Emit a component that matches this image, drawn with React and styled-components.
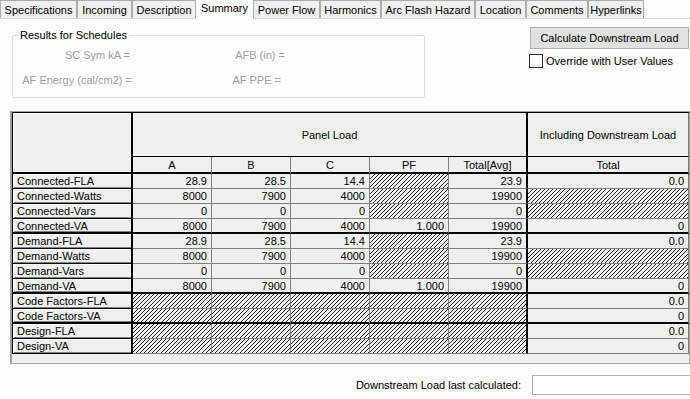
import React from 'react';
import styled, { createGlobalStyle } from 'styled-components';

const GlobalStyle = createGlobalStyle`
  html, body {
    margin: 0;
    padding: 0;
    background: #fcfcfc;
  }
  body {
    font-family: "Liberation Sans", Arial, sans-serif;
    font-size: 11px;
    color: #000;
  }
`;

const Page = styled.div`
  width: 690px;
  height: 399px;
  overflow: hidden;
`;

const TabStrip = styled.div`
  display: flex;
  align-items: flex-start;
  height: 19px;
  box-sizing: border-box;
  border-bottom: 1px solid #d9d9d9;
`;

const Tab = styled.div`
  box-sizing: border-box;
  width: ${(p) => p.$width}px;
  height: ${(p) => (p.$active ? 19 : 18)}px;
  padding-top: ${(p) => (p.$active ? 1 : 3)}px;
  text-align: center;
  line-height: 13px;
  background: ${(p) => (p.$active ? '#fcfcfc' : '#f0f0f0')};
  border: 1px solid ${(p) => (p.$active ? '#fcfcfc' : '#acacac')};
  border-bottom: none;
  white-space: nowrap;
`;

const Top = styled.div`
  display: flex;
  align-items: flex-start;
  padding-top: 8px;
`;

const Group = styled.fieldset`
  box-sizing: border-box;
  margin: 2px 0 0 12px;
  padding: 0;
  width: 413px;
  height: 69px;
  border: 1px solid #dcdcdc;
  border-radius: 2px;
`;

const Legend = styled.legend`
  margin-left: 5px;
  padding: 0 2px;
  line-height: 13px;
`;

const Results = styled.div`
  display: grid;
  grid-template-columns: 119px 153px;
  grid-auto-rows: 13px;
  row-gap: 12px;
  padding-top: 7px;
  line-height: 13px;
  color: #a0a0a0;
`;

const ResultLabel = styled.div`
  text-align: right;
  white-space: nowrap;
  padding-right: ${(p) => p.$pad || 0}px;
`;

const Side = styled.div`
  margin-left: auto;
  margin-right: 1px;
  width: 159px;
  display: flex;
  flex-direction: column;
`;

const Button = styled.button`
  box-sizing: border-box;
  height: 22px;
  width: 100%;
  margin: 0;
  padding: 0;
  font-family: inherit;
  font-size: 11px;
  color: #000;
  background: #e1e1e1;
  border: 1px solid #adadad;
`;

const CheckRow = styled.label`
  display: flex;
  align-items: center;
  margin: 5px 0 0 -1px;
  line-height: 13px;
  white-space: nowrap;
`;

const CheckBox = styled.span`
  box-sizing: border-box;
  width: 14px;
  height: 14px;
  border: 1px solid #333;
  background: #fff;
  margin-right: 3px;
`;

const Frame = styled.div`
  box-sizing: border-box;
  margin: 13px 0 0 10px;
  width: 680px;
  border: 1px solid #a0a0a0;
  border-left-width: 2px;
  background: #f0f0f0;
  padding-bottom: 9px;
`;

const Grid = styled.div`
  display: grid;
  grid-template-columns: 120px repeat(5, 79px) 161px;
  grid-template-rows: 44px 17px repeat(12, 15px);
  border-left: 1px solid #000;
  border-top: 1px solid #000;
  line-height: 14px;
`;

const Corner = styled.div`
  grid-row: span 2;
  box-sizing: border-box;
  background: #f0f0f0;
  border-right: 2px solid #000;
  border-bottom: 2px solid #000;
  box-shadow: inset 1px 1px 0 #fff;
`;

const GroupHead = styled.div`
  grid-column: span ${(p) => p.$span || 1};
  box-sizing: border-box;
  display: flex;
  align-items: center;
  justify-content: center;
  background: #f0f0f0;
  border-right: ${(p) => (p.$strong ? '2px solid #000' : '1px solid #808080')};
  border-bottom: 1px solid #000;
  white-space: nowrap;
`;

const ColHead = styled.div`
  box-sizing: border-box;
  display: flex;
  align-items: center;
  justify-content: center;
  background: #f0f0f0;
  border-right: ${(p) => (p.$strong ? '2px solid #000' : '1px solid #808080')};
  border-bottom: 2px solid #000;
`;

const RowHead = styled.div`
  box-sizing: border-box;
  padding-left: 4px;
  background: #f0f0f0;
  border-right: 2px solid #000;
  border-bottom: ${(p) => (p.$thick ? '2px' : '1px')} solid #000;
  box-shadow: inset 1px 1px 0 #fff, inset 0 -1px 0 #808080;
  white-space: nowrap;
  overflow: hidden;
`;

const Cell = styled.div`
  box-sizing: border-box;
  padding-right: 4px;
  text-align: right;
  background: ${(p) =>
    p.$hatched
      ? 'repeating-linear-gradient(135deg, #222 0 0.7px, #f0f0f0 0.7px 2.9px)'
      : '#f0f0f0'};
  border-right: ${(p) => (p.$strong ? '2px solid #000' : '1px solid #808080')};
  border-bottom: ${(p) => (p.$thick ? '2px solid #000' : '1px solid #808080')};
  overflow: hidden;
`;

const Bottom = styled.div`
  display: flex;
  align-items: center;
  justify-content: flex-end;
  margin-top: 11px;
`;

const BottomLabel = styled.span`
  margin-right: 11px;
`;

const TextBox = styled.div`
  box-sizing: border-box;
  width: 158px;
  height: 20px;
  background: #fff;
  border: 1px solid #abadb3;
  border-right: none;
`;

const tabs = [
  ['Specifications', 77],
  ['Incoming', 55],
  ['Description', 64],
  ['Summary', 57],
  ['Power Flow', 67],
  ['Harmonics', 61],
  ['Arc Flash Hazard', 94],
  ['Location', 51],
  ['Comments', 62],
  ['Hyperlinks', 56],
];

const rows = [
  { name: 'Connected-FLA', v: ['28.9', '28.5', '14.4', null, '23.9'], inc: '0.0' },
  { name: 'Connected-Watts', v: ['8000', '7900', '4000', null, '19900'], inc: null },
  { name: 'Connected-Vars', v: ['0', '0', '0', null, '0'], inc: null },
  { name: 'Connected-VA', v: ['8000', '7900', '4000', '1.000', '19900'], inc: '0', thick: true },
  { name: 'Demand-FLA', v: ['28.9', '28.5', '14.4', null, '23.9'], inc: '0.0' },
  { name: 'Demand-Watts', v: ['8000', '7900', '4000', null, '19900'], inc: null },
  { name: 'Demand-Vars', v: ['0', '0', '0', null, '0'], inc: null },
  { name: 'Demand-VA', v: ['8000', '7900', '4000', '1.000', '19900'], inc: '0', thick: true },
  { name: 'Code Factors-FLA', v: [null, null, null, null, null], inc: '0.0' },
  { name: 'Code Factors-VA', v: [null, null, null, null, null], inc: '0', thick: true },
  { name: 'Design-FLA', v: [null, null, null, null, null], inc: '0.0' },
  { name: 'Design-VA', v: [null, null, null, null, null], inc: '0' },
];

const App = () => (
  <Page>
    <GlobalStyle />

    <TabStrip>
      {tabs.map(([label, w]) => (
        <Tab key={label} $width={w} $active={label === 'Summary'}>{label}</Tab>
      ))}
    </TabStrip>

    <Top>
      <Group>
        <Legend>Results for Schedules</Legend>
        <Results>
          <ResultLabel $pad={2}>SC Sym kA =</ResultLabel>
          <ResultLabel>AFB (in) =</ResultLabel>
          <ResultLabel>AF Energy (cal/cm2) =</ResultLabel>
          <ResultLabel $pad={4}>AF PPE =</ResultLabel>
        </Results>
      </Group>

      <Side>
        <Button>Calculate Downstream Load</Button>
        <CheckRow>
          <CheckBox />
          Override with User Values
        </CheckRow>
      </Side>
    </Top>

    <Frame>
      <Grid>
        <Corner />
        <GroupHead $span={5} $strong>Panel Load</GroupHead>
        <GroupHead>Including Downstream Load</GroupHead>
        <ColHead>A</ColHead>
        <ColHead>B</ColHead>
        <ColHead>C</ColHead>
        <ColHead>PF</ColHead>
        <ColHead $strong>Total[Avg]</ColHead>
        <ColHead>Total</ColHead>

        {rows.map((r) => (
          <React.Fragment key={r.name}>
            <RowHead $thick={r.thick}>{r.name}</RowHead>
            {r.v.map((val, i) => (
              <Cell key={i} $thick={r.thick} $strong={i === 4} $hatched={val === null}>
                {val}
              </Cell>
            ))}
            <Cell $thick={r.thick} $hatched={r.inc === null}>{r.inc}</Cell>
          </React.Fragment>
        ))}
      </Grid>
    </Frame>

    <Bottom>
      <BottomLabel>Downstream Load last calculated:</BottomLabel>
      <TextBox />
    </Bottom>
  </Page>
);

export default App;
